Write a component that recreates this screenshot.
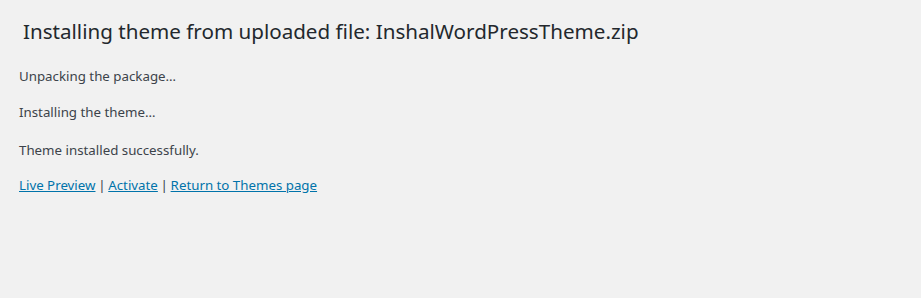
export default function App() {
  return (
    <div className="min-h-[298px] w-[921px] bg-[#f1f1f1] text-[#3c434a]" style={{ fontFamily: '"Noto Sans", "Open Sans", sans-serif' }}>
      <div className="pl-[19px] pt-[15px]">
        <h1 className="ml-[4px] text-[20.6px] leading-[32px] text-[#23282d]">
          Installing theme from uploaded file: InshalWordPressTheme.zip
        </h1>
        <p className="mt-[19px] text-[13.3px] leading-[20px]">Unpacking the package…</p>
        <p className="mt-[16px] text-[13.3px] leading-[20px]">Installing the theme…</p>
        <p className="mt-[18px] text-[13.3px] leading-[20px]">Theme installed successfully.</p>
        <p className="mt-[15px] text-[13.3px] leading-[20px]">
          <a href="#" className="text-[#0073aa] underline">Live Preview</a>
          <span className="[word-spacing:-0.75px]"> | </span>
          <a href="#" className="text-[#0073aa] underline">Activate</a>
          <span className="[word-spacing:-0.75px]"> | </span>
          <a href="#" className="text-[#0073aa] underline">Return to Themes page</a>
        </p>
      </div>
    </div>
  );
}
